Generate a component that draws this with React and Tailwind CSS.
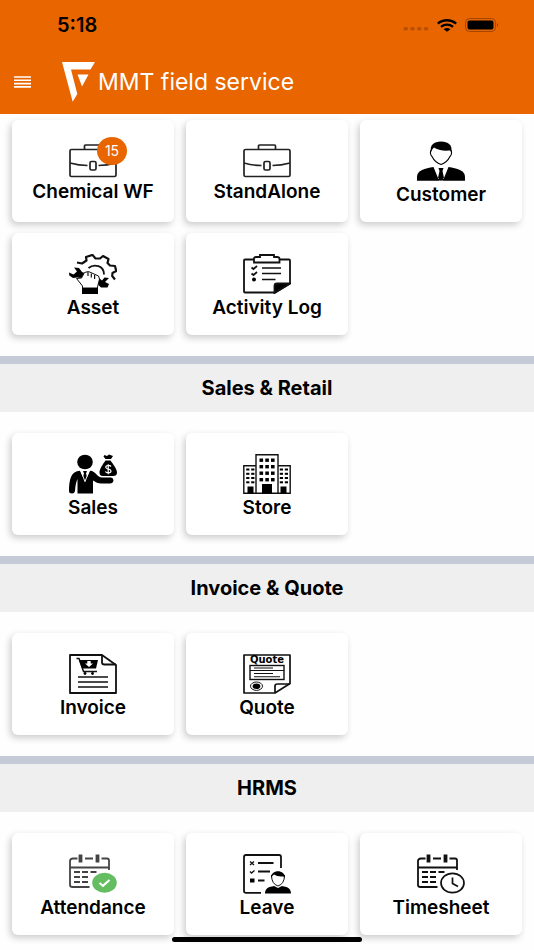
const sections = [
  {
    id: 'field',
    items: [
      { label: 'Chemical WF', icon: BriefcaseIcon, badge: 15 },
      { label: 'StandAlone', icon: BriefcaseIcon },
      { label: 'Customer', icon: CustomerIcon },
      { label: 'Asset', icon: AssetIcon },
      { label: 'Activity Log', icon: ActivityIcon },
    ],
  },
  {
    id: 'sales',
    title: 'Sales & Retail',
    items: [
      { label: 'Sales', icon: SalesIcon },
      { label: 'Store', icon: StoreIcon },
    ],
  },
  {
    id: 'invoice',
    title: 'Invoice & Quote',
    items: [
      { label: 'Invoice', icon: InvoiceIcon },
      { label: 'Quote', icon: QuoteIcon },
    ],
  },
  {
    id: 'hrms',
    title: 'HRMS',
    items: [
      { label: 'Attendance', icon: AttendanceIcon },
      { label: 'Leave', icon: LeaveIcon },
      { label: 'Timesheet', icon: TimesheetIcon },
    ],
  },
]

export default function App() {
  return (
    <div className="relative flex h-screen flex-col overflow-hidden bg-[#fefefe] font-['Inter',sans-serif] text-black">
      <header className="shrink-0 bg-[#e86500]">
        <StatusBar />
        <div className="flex h-16 items-center pl-3.5">
          <button className="text-white">
            <MenuIcon />
          </button>
          <div className="ml-[31px] flex items-center gap-[3px]">
            <Logo />
            <h1 className="text-[23px] text-white">MMT field service</h1>
          </div>
        </div>
      </header>

      <main className="flex-1 overflow-y-auto [scrollbar-width:none]">
        {sections.map((section) => (
          <Section key={section.id} section={section} />
        ))}
      </main>

      {/* Home indicator */}
      <div className="absolute bottom-2 left-1/2 h-[5px] w-[190px] -translate-x-1/2 rounded-full bg-black" />
    </div>
  )
}

function StatusBar() {
  return (
    <div className="flex h-[50px] items-center justify-between pr-[35px] pl-[57px]">
      <span className="text-xl font-semibold">5:18</span>
      <div className="flex items-center gap-2">
        <svg width="26" height="4" viewBox="0 0 26 4" className="mt-2 fill-[#b85000]">
          <rect x="0.5" y="0" width="4.5" height="3.5" rx="1.7" />
          <rect x="7.2" y="0" width="4.5" height="3.5" rx="1.7" />
          <rect x="14" y="0" width="4.5" height="3.5" rx="1.7" />
          <rect x="20.8" y="0" width="4.5" height="3.5" rx="1.7" />
        </svg>
        <svg width="20" height="13" viewBox="0 0 20 13" fill="none" stroke="#000" strokeWidth="2.3">
          <path d="M0.8 4.6C6 0.1 14 0.1 19.2 4.6" />
          <path d="M4 7.8C7.5 4.9 12.5 4.9 16 7.8" />
          <path d="M10 12.8L6.6 10.2Q10 7.8 13.4 10.2Z" fill="#000" stroke="none" />
        </svg>
        <svg width="34" height="14" viewBox="0 0 34 14">
          <rect x="0.5" y="0.5" width="30" height="13" rx="4" fill="none" stroke="#a04600" />
          <rect x="2.5" y="2.5" width="26" height="9" rx="2" />
          <path d="M32 5q2 2 0 4z" fill="#8c3d00" />
        </svg>
      </div>
    </div>
  )
}

function Section({ section }) {
  return (
    <section>
      {section.title && (
        <h2 className="border-t-8 border-[#c4cbd6] bg-[#efefef] py-2.5 text-center text-xl leading-7 font-bold">
          {section.title}
        </h2>
      )}
      <div
        className={`grid grid-cols-3 gap-x-3 gap-y-[11px] px-3 pb-[21px] ${
          section.title ? 'pt-[21px]' : 'pt-1.5'
        }`}
      >
        {section.items.map((item) => (
          <Tile key={item.label} item={item} />
        ))}
      </div>
    </section>
  )
}

function Tile({ item }) {
  return (
    <button className="flex min-h-[102px] flex-col items-center justify-center rounded-md bg-white pt-2 shadow-[-2px_3px_7px_rgba(0,0,0,0.2)]">
      <span className="relative">
        <item.icon />
        {item.badge && (
          <span className="absolute -top-[7px] left-7 flex h-7 w-[30px] items-center justify-center rounded-[50%] bg-[#e86500] text-sm text-white">
            {item.badge}
          </span>
        )}
      </span>
      <span className="text-[19px] leading-7 font-semibold whitespace-nowrap">{item.label}</span>
    </button>
  )
}

function MenuIcon() {
  return (
    <svg width="17" height="12" viewBox="0 0 17 12" fill="none" stroke="currentColor" strokeWidth="1.6">
      <title>Menu</title>
      <path d="M0 1H17M0 4.3H17M0 7.6H17M0 10.9H17" />
    </svg>
  )
}

function Logo() {
  return (
    <svg width="33" height="40" viewBox="0 0 33 40" fill="#fff">
      <path d="M0 0H33L28.5 7.5H9L15.3 32L10.7 39.8Z" />
      <path d="M15.5 12.5H26.5L20 24.5Z" />
    </svg>
  )
}

function BriefcaseIcon() {
  return (
    <svg width="48" height="34" viewBox="0 0 48 34" fill="none" stroke="#222" strokeWidth="1.7">
      <rect x="1" y="5.5" width="46" height="27" rx="1.5" />
      <path d="M15.5 5.5V2Q15.5 1 16.5 1H31.5Q32.5 1 32.5 2V5.5" />
      <path d="M1 19Q10 21.5 18.5 21.5M29.5 21.5Q38 21.5 47 19" />
      <rect x="21" y="17.5" width="6" height="8.5" rx="1.5" />
    </svg>
  )
}

function CustomerIcon() {
  return (
    <svg width="48" height="40" viewBox="0 0 48 40">
      <path
        d="M14 9Q12.5 13 15 15.5Q18 21.5 24 23.5Q30 21.5 33 15.5Q35.5 13 34 9"
        fill="#fff"
        stroke="#000"
        strokeWidth="1.1"
      />
      <path d="M14 11C12.5 4 17 0.5 24 0.5C31 0.5 36 4 34.2 11L33 9.5C26 10 20 9 17 6.5Q15 8 14 11Z" />
      <path d="M0 39.5V36C0 29 8 27.5 16.5 26L22 39.5Z" />
      <path d="M48 39.5V36C48 29 40 27.5 31.5 26L26 39.5Z" />
      <path d="M21.5 27H26.5L25.5 30L27 37L24 39.5L21 37L22.5 30Z" />
      <path d="M0 38H48V39.5H0Z" />
    </svg>
  )
}

function AssetIcon() {
  return (
    <svg width="48" height="40" viewBox="0 0 48 40" fill="none" stroke="#111">
      <path
        d="M8 8.5L13 9.5L17.5 6.5L17 3L23.5 0.9L26.5 4.5L31 4.5L34 2L39.5 5L38.5 9L41 11.5L46 12L47.2 17L43.5 19L43.2 22L46 25.5"
        strokeWidth="2.2"
        strokeLinejoin="round"
      />
      <path d="M19.5 14C25 9.5 35 11.5 35 20.5" strokeWidth="1.9" />
      <path
        d="M5 13.5L10 14L13 18L15.5 19L12.5 24L8 23.5L4 24L0.3 21.5L0 18.5L4.5 20.5L8 17.5Z"
        fill="#000"
        stroke="none"
      />
      <path
        d="M30 24L33 26.5L35.5 23.5L40 24L36 28L40 30L38.5 33.5L32 33.5L28.5 30Z"
        fill="#000"
        stroke="none"
      />
      <path
        d="M13.5 34V32L7.5 24.5L12.5 24L15.5 18.5L19.5 17.5L29.5 22L30.5 25L28.5 33V34Z"
        fill="#fff"
        strokeWidth="1"
      />
      <path d="M19 18V22M22.3 19.5V23.5M25.6 21V25" strokeWidth="1.2" />
      <rect x="13" y="34" width="16" height="6" fill="#000" stroke="none" />
    </svg>
  )
}

function ActivityIcon() {
  return (
    <svg width="48" height="40" viewBox="0 0 48 40" fill="none" stroke="#111" strokeWidth="1.8">
      <path d="M11 5.5H2Q1 5.5 1 6.5V37.5Q1 38.5 2 38.5H32L47 29.5V6.5Q47 5.5 46 5.5H36" />
      <path d="M11 8.5V4.5Q11 3 13 3H17V1H31V3H34Q36.5 3 36.5 5V8.5Z" />
      <path d="M31.5 39V32Q31.5 29.5 34 29.5H47Z" fill="#000" />
      <path d="M8.5 13.5L10.5 15L14 12M8.5 19.5L10.5 21L14 18" strokeWidth="1.8" />
      <circle cx="11" cy="25.5" r="2" fill="#000" stroke="none" />
      <path d="M19 14H38M19 19.5H38M19 25.5H32.5" strokeWidth="1.5" />
    </svg>
  )
}

function SalesIcon() {
  return (
    <svg width="48" height="40" viewBox="0 0 48 40">
      <ellipse cx="16" cy="8" rx="7.8" ry="7.3" />
      <path d="M0 37C0 26 2 17 11 16.8L16 28L21 16.8C27 17 28 23.5 33 23.5H42Q44.5 24 44.5 26.5Q44 29.5 41 29.5H32Q27 29 24 26.5V39.5H8.5V25Q6.5 29 6 37Q5.5 39.5 3 39.5Q0 39.5 0 37Z" />
      <path d="M14 17H18L17 19.5L18.5 24L16 27L13.5 24L15 19.5Z" />
      <path d="M12 17L16 27.5L20 17" fill="none" stroke="#fff" strokeWidth="0.9" />
      <path d="M35.5 1L38 2L40 0.5L44 2L42 5L36.5 5L34.5 2.5Z" />
      <path d="M36.5 6.5H41.5C44 10 48 15 48 18.5Q48 22 44 22H34Q30.5 22 30.5 18.5C30.5 15 34 10 36.5 6.5Z" />
      <path
        d="M42 12.5C40.5 10.8 36.5 11.2 36.8 13.5C37.2 15.8 42 14.5 42 17C42 19.5 37.5 19.2 36.3 17.5M39.2 10.2V20.2"
        fill="none"
        stroke="#fff"
        strokeWidth="1.2"
      />
    </svg>
  )
}

function StoreIcon() {
  return (
    <svg width="48" height="40" viewBox="0 0 48 40">
      <path
        d="M13 39.3V0.8H35V39.3M13 11.8H0.8V39.3H47.2V11.8H35"
        fill="none"
        stroke="#111"
        strokeWidth="1.4"
      />
      {[4.5, 11, 17.5, 24].map((y) =>
        [16.5, 22.3, 28].map((x) => <rect key={`${x}-${y}`} x={x} y={y} width="3.6" height="3.4" />)
      )}
      {[14.5, 18.8, 23, 27.3].map((y) =>
        [3.2, 8.2, 36.8, 41.8].map((x) => <rect key={`${x}-${y}`} x={x} y={y} width="3.2" height="2" />)
      )}
      <path d="M19 30H29V39.5H19ZM4.5 32.5H10.5V39.5H4.5ZM37.5 32.5H43.5V39.5H37.5Z" />
    </svg>
  )
}

function InvoiceIcon() {
  return (
    <svg width="48" height="40" viewBox="0 0 48 40" fill="none" stroke="#111" strokeWidth="1.8">
      <path d="M1 1H33L47 11V39H1Z" strokeLinejoin="round" />
      <path d="M33 1V8.5Q33 10.5 35.5 10.5H47" />
      <path d="M7.5 4.5H10L14.5 17.5H28" strokeWidth="1.5" />
      <path d="M10 6H29L27 14.5H13Z" fill="#000" stroke="none" />
      <path d="M18.3 7H21.7V9.5H24L20 13L16 9.5H18.3Z" fill="#fff" stroke="none" />
      <circle cx="16" cy="19.5" r="1.4" fill="#000" stroke="none" />
      <circle cx="23.5" cy="19.5" r="1.4" fill="#000" stroke="none" />
      <path d="M9 23H39M9 28H39M9 33H39" strokeWidth="1.6" />
    </svg>
  )
}

function QuoteIcon() {
  return (
    <svg width="48" height="40" viewBox="0 0 48 40" fill="none" stroke="#111" strokeWidth="1.7">
      <path d="M1 1H47V29.5L32 39H1Z" strokeLinejoin="round" />
      <path d="M32 39V32Q32 30 34.5 30H47" />
      <text
        x="24"
        y="9"
        textAnchor="middle"
        fill="#000"
        stroke="none"
        className="font-['DejaVu_Sans',sans-serif] text-[10px] font-bold"
      >
        Quote
      </text>
      <rect x="7" y="11.5" width="34" height="14" strokeWidth="1.4" />
      <path d="M7 16.5H41M11 14H30M11 19.5H30M11 22.8H37" strokeWidth="1.1" />
      <ellipse cx="13.5" cy="32.2" rx="6" ry="4.2" strokeWidth="1" />
      <ellipse cx="13.5" cy="32.2" rx="3.8" ry="2.8" fill="#000" stroke="none" />
    </svg>
  )
}

function Calendar({ color }) {
  return (
    <g fill="none" stroke={color} strokeWidth="1.8">
      <path d="M8.5 4.5H4Q1 4.5 1 7V31Q1 33 3.5 33H20.5M16 4.5H24M32.5 4.5H38Q40 4.5 40 6.5V16M1 13.5H40" />
      <path d="M11.5 0.5V8.5M28.5 0.5V8.5" strokeWidth="3.8" />
      <path d="M5 18H11M13 18H19M21.5 18H27.5M5 23H11M13 23H19M5 28H11M13 28H19" />
    </g>
  )
}

function AttendanceIcon() {
  return (
    <svg width="48" height="40" viewBox="0 0 48 40">
      <Calendar color="#444" />
      <ellipse cx="35.5" cy="28.7" rx="12.3" ry="10" fill="#65bd62" />
      <path d="M30.5 29L34 31.8L40.5 26" fill="none" stroke="#fff" strokeWidth="2.2" />
    </svg>
  )
}

function LeaveIcon() {
  return (
    <svg width="48" height="40" viewBox="0 0 48 40" fill="none" stroke="#111" strokeWidth="1.8">
      <path d="M18 38.8H3Q1 38.8 1 37V3Q1 1 3 1H36Q38 1 38 3V14" />
      <path d="M7 7.5L11 11M11 7.5L7 11M7 17.5L8.5 19L11.5 16.5" strokeWidth="1.3" />
      <path d="M15 9H30.5M15 17.5H27M15 26.5H21.5" />
      <rect x="7" y="24.5" width="4.5" height="4" fill="#000" stroke="none" />
      <path d="M28.5 21Q28.5 30 35 32Q41.5 30 41.5 21" fill="#fff" strokeWidth="1" />
      <path d="M28 24C27.5 15 42.5 15 42 24L40.5 22.5Q34 23 31 20.5Q29 21.5 28 24Z" fill="#000" stroke="none" />
      <path d="M22 39.5C22 34 26 33 31 32L35 34L39 32C44 33 48 34 48 39.5Z" fill="#000" stroke="none" />
    </svg>
  )
}

function TimesheetIcon() {
  return (
    <svg width="48" height="40" viewBox="0 0 48 40">
      <Calendar color="#111" />
      <ellipse cx="35.5" cy="29" rx="11.5" ry="9.7" fill="#fff" stroke="#111" strokeWidth="1.7" />
      <path d="M35.5 23.5V29.5L41 32.5" fill="none" stroke="#111" strokeWidth="1.7" />
    </svg>
  )
}
